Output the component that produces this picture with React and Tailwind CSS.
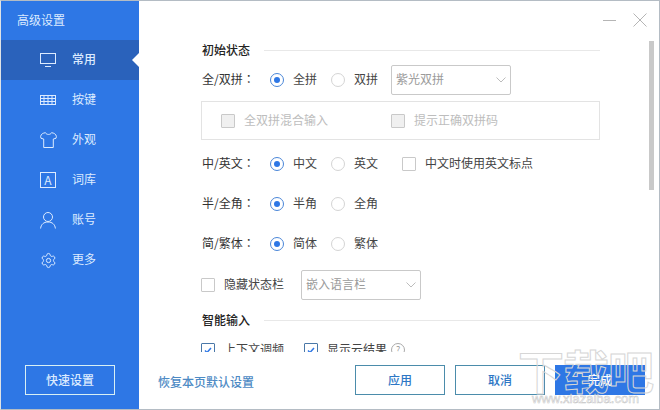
import React from 'react';

const font = 'font-["Noto_Sans_CJK_SC","Liberation_Sans",sans-serif]';

function Monitor() {
  return (
    <svg width="16" height="14" viewBox="0 0 16 14" fill="none" stroke="currentColor" strokeWidth="1">
      <rect x="0.5" y="0.5" width="15" height="10" />
      <path d="M5 13.500h6" />
    </svg>
  );
}

function Keyboard() {
  return (
    <svg width="16" height="10" viewBox="0 0 16 10" fill="none" stroke="currentColor" strokeWidth="1">
      <rect x="0.5" y="0.5" width="15" height="9" />
      <path d="M0.5 3.5h15M0.5 6.5h15M4 0.5v9M8 0.5v9M12 0.5v9" />
    </svg>
  );
}

function Shirt() {
  return (
    <svg width="17" height="16" viewBox="0 0 17 16" fill="none" stroke="currentColor" strokeWidth="1">
      <path d="M5.500 0.700C3 1 1 2 .6 4.500l.4 1.800 2.700.7v8.500h9.600V7l2.700-.7.4-1.800C16 2 14 1 11.500.7c-.8 2.300-5.200 2.300-6 0z" />
    </svg>
  );
}

function LetterBox() {
  return (
    <span className="flex h-[16px] w-[16px] items-center justify-center border border-current text-[12px] leading-none">A</span>
  );
}

function User() {
  return (
    <svg width="16" height="17" viewBox="0 0 16 17" fill="none" stroke="currentColor" strokeWidth="1">
      <circle cx="8" cy="5" r="4.500" />
      <path d="M0.600 16.500c.4-4 3-6.500 7.400-6.500s7 2.500 7.400 6.500" />
    </svg>
  );
}

function Gear() {
  return (
    <svg width="17" height="17" viewBox="0 0 24 24" fill="none" stroke="currentColor" strokeWidth="1.400">
      <path d="M9.671 4.136a2.34 2.34 0 0 1 4.659 0 2.34 2.34 0 0 0 3.319 1.915 2.34 2.34 0 0 1 2.33 4.033 2.34 2.34 0 0 0 0 3.831 2.34 2.34 0 0 1-2.33 4.033 2.34 2.34 0 0 0-3.319 1.915 2.34 2.34 0 0 1-4.659 0 2.34 2.34 0 0 0-3.32-1.915 2.34 2.34 0 0 1-2.33-4.033 2.34 2.34 0 0 0 0-3.831A2.34 2.34 0 0 1 6.350 6.051a2.34 2.34 0 0 0 3.319-1.915" />
      <circle cx="12" cy="12" r="3" />
    </svg>
  );
}

const navItems = [
  { label: '常用', icon: <Monitor />, active: true },
  { label: '按键', icon: <Keyboard /> },
  { label: '外观', icon: <Shirt /> },
  { label: '词库', icon: <LetterBox /> },
  { label: '账号', icon: <User /> },
  { label: '更多', icon: <Gear /> },
];

function Radio({ checked, label }) {
  return (
    <span className="flex items-center gap-[9px] text-[12px] text-[#444]">
      <span className={`flex h-[14px] w-[14px] items-center justify-center rounded-full border ${checked ? 'border-[#4a86d8]' : 'border-[#d4d4d4]'}`}>
        {checked && <span className="h-[6px] w-[6px] rounded-full bg-[#2e77e5]" />}
      </span>
      <span className="-mt-[2px]">{label}</span>
    </span>
  );
}

function Check({ label, disabled, checked, className = '' }) {
  return (
    <span className={`flex items-center gap-[9px] text-[12px] ${disabled ? 'text-[#bdbdbd]' : 'text-[#444]'} ${className}`}>
      <span className={`flex h-[14px] w-[14px] shrink-0 items-center justify-center rounded-[1px] border ${checked ? 'border-[#4a78a8]' : 'border-[#c9c9c9]'} ${disabled ? 'bg-[#f0f0f0]' : 'bg-white'}`}>
        {checked && (
          <svg width="10" height="10" viewBox="0 0 10 10" fill="none" stroke="#2e77e5" strokeWidth="1.500">
            <path d="M2 5.500 4 7.500 8 3" />
          </svg>
        )}
      </span>
      <span className="-mt-[2px]">{label}</span>
    </span>
  );
}

function Select({ label, className = '' }) {
  return (
    <span className={`flex h-[30px] items-center justify-between rounded-[2px] border border-[#c9c9c9] pl-[4px] pr-[4px] text-[12px] text-[#9a9a9a] ${className}`}>
      <span className="-mt-[2px]">{label}</span>
      <svg width="10" height="6" viewBox="0 0 10 6" fill="none" stroke="#bcbcbc" strokeWidth="1">
        <path d="M0.500 0.500 5 5l4.500-4.500" />
      </svg>
    </span>
  );
}

function SectionTitle({ children }) {
  return (
    <div className="flex h-[20px] items-center gap-[14px]">
      <span className="text-[12px] font-medium text-[#222]">{children}</span>
      <span className="h-px flex-1 bg-[#e8e8e8]" />
    </div>
  );
}

function Row({ label, children }) {
  return (
    <div className="flex h-[20px] items-center text-[12px] text-[#333]">
      <span className="-mt-[2px] w-[68px] shrink-0">
        {label}
        <span className='font-["Noto_Sans_CJK_TC",sans-serif]'>：</span>
      </span>
      {children}
    </div>
  );
}

export default function App() {
  return (
    <div className={`relative flex h-[410px] w-[660px] overflow-hidden border border-[#b4bcc4] border-l-[#dfe3e6] bg-white ${font}`}>
      <aside className="flex w-[138px] shrink-0 flex-col bg-[#2e77e5] text-[#dcebff]">
        <div className="flex h-[39px] items-center pb-[1px] pl-[16px] text-[12px]">高级设置</div>
        {navItems.map((item) => (
          <div key={item.label} className={`relative flex h-[40px] items-center ${item.active ? 'bg-[#2a62bb] font-medium' : ''}`}>
            <span className="flex w-[71px] justify-center pl-[23px]">{item.icon}</span>
            <span className="-mt-[2px] text-[12px]">{item.label}</span>
            {item.active && (
              <span className="absolute right-0 top-[13px] h-0 w-0 border-y-[7px] border-r-[7px] border-y-transparent border-r-white" />
            )}
          </div>
        ))}
        <div className="mt-auto mb-[14px] ml-[24px] flex h-[30px] w-[90px] items-center justify-center border border-[#d8f0f4] text-[12px] font-medium">快速设置</div>
      </aside>

      <main className="relative flex min-w-0 flex-1 flex-col">
        <div className="flex h-[39px] shrink-0 items-start justify-end pr-[12px] pt-[12px] text-[#b5b5b5]">
          <svg width="13" height="13" viewBox="0 0 13 13" fill="none" stroke="currentColor" strokeWidth="1" className="mr-[17px]">
            <path d="M0 7.500h13" />
          </svg>
          <svg width="14" height="14" viewBox="0 0 14 14" fill="none" stroke="currentColor" strokeWidth="1">
            <path d="M0.500 0.500l13 13M13.500 0.500l-13 13" />
          </svg>
        </div>

        <div className="h-[312px] shrink-0 overflow-hidden pl-[63px] pr-[59px]">
          <SectionTitle>初始状态</SectionTitle>
          <div className="mt-[10px]">
            <Row label="全/双拼">
              <Radio checked label="全拼" />
              <span className="ml-[14px]"><Radio label="双拼" /></span>
              <Select label="紫光双拼" className="ml-[13px] w-[120px]" />
            </Row>
          </div>
          <div className="mt-[11px] -ml-[1px] flex h-[39px] items-center border border-[#e3e3e3] pl-[19px]">
            <Check disabled label="全双拼混合输入" className="w-[170px]" />
            <Check disabled label="提示正确双拼码" />
          </div>
          <div className="mt-[14px]">
            <Row label="中/英文">
              <Radio checked label="中文" />
              <span className="ml-[14px]"><Radio label="英文" /></span>
              <Check label="中文时使用英文标点" className="ml-[24px]" />
            </Row>
          </div>
          <div className="mt-[20px]">
            <Row label="半/全角">
              <Radio checked label="半角" />
              <span className="ml-[14px]"><Radio label="全角" /></span>
            </Row>
          </div>
          <div className="mt-[20px]">
            <Row label="简/繁体">
              <Radio checked label="简体" />
              <span className="ml-[14px]"><Radio label="繁体" /></span>
            </Row>
          </div>
          <div className="mt-[21px] -ml-[1px] flex h-[20px] items-center">
            <Check label="隐藏状态栏" className="w-[100px]" />
            <Select label="嵌入语言栏" className="w-[120px]" />
          </div>
          <div className="mt-[15px]">
            <SectionTitle>智能输入</SectionTitle>
          </div>
          <div className="mt-[10px] -ml-[1px] flex h-[20px] items-center">
            <Check checked label="上下文调频" className="w-[103px]" />
            <Check checked label="显示云结果" />
            <span className="ml-[4px] flex h-[14px] w-[14px] items-center justify-center rounded-full border border-[#aaa] text-[9px] text-[#999]">?</span>
          </div>
        </div>

        <div className="flex flex-1 items-start pl-[19px] pt-[13px]">
          <span className="mt-[8px] w-[197px] text-[12px] font-medium text-[#4d8ac4]">恢复本页默认设置</span>
          <button className="h-[30px] w-[90px] border border-[#4b8cab] text-[12px] font-medium text-[#2e77c5]">应用</button>
          <button className="ml-[10px] h-[30px] w-[90px] border border-[#4b8cab] text-[12px] font-medium text-[#2e77c5]">取消</button>
          <button className="ml-[10px] h-[30px] w-[90px] bg-[#2e77e5] text-[12px] font-medium text-white">完成</button>
        </div>

        <span className="absolute right-[5px] top-[40px] h-[149px] w-[5px] bg-[#c9c9c9]" />
      </main>

      {/* watermark */}
      <div className="pointer-events-none absolute bottom-[5px] right-[6px] flex flex-col items-center text-transparent">
        <span className="text-[46px] font-bold leading-[47px] tracking-[-1px] [-webkit-text-stroke:1px_#d6d6d6]">下载吧</span>
        <span className='font-["Liberation_Sans",sans-serif] text-[13px] leading-[11px] [-webkit-text-stroke:0.5px_#c4c4c4]'>www.xiazaiba.com</span>
      </div>
    </div>
  );
}
